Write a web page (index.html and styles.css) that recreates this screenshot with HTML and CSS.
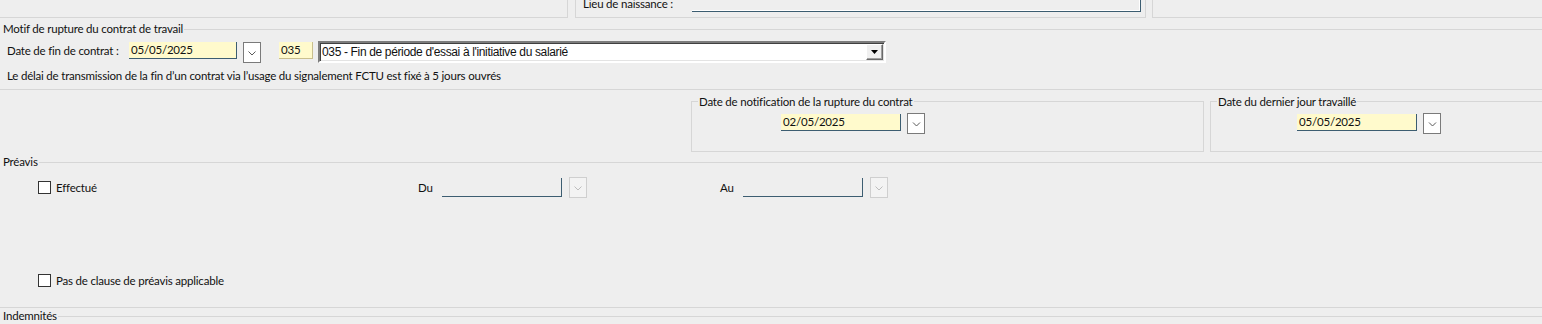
FILE: index.html
```html
<!DOCTYPE html>
<html lang="fr">

<head>
  <meta charset="UTF-8">
  <meta name="viewport" content="width=device-width, initial-scale=1.0">
  <link rel="stylesheet" href="styles.css">
  <title>Motif de rupture du contrat</title>
</head>

<body>
  <!-- bas des cadres du bloc précédent -->
  <div class="top">
    <div class="box box-left"></div>
    <div class="box box-mid">
      <span class="lbl lbl-lieu">Lieu de naissance :</span>
      <div class="field-dark"></div>
    </div>
    <div class="box box-right"></div>
  </div>

  <div class="legend legend-motif"><span>Motif de rupture du contrat de travail</span></div>
  <div class="row row-fin">
    <span class="lbl lbl-fin">Date de fin de contrat :</span>
    <div class="date date-fin">05/05/2025</div>
    <div class="btn"><svg width="16" height="19" viewBox="0 0 16 19"><path d="M4.5 8.5 L8 12 L11.5 8.5" fill="none" stroke="#5a5a5a" stroke-width="1"/></svg></div>
    <div class="date code">035</div>
    <div class="combo">
      <span class="combo-text">035 - Fin de période d'essai à l'initiative du salarié</span>
      <div class="combo-arrow"><svg width="7" height="4" viewBox="0 0 7 4"><path d="M0 0 H7 L3.5 4 Z" fill="#000"/></svg></div>
    </div>
  </div>
  <p class="note">Le délai de transmission de la fin d’un contrat via l’usage du signalement FCTU est fixé à 5 jours ouvrés</p>
  <div class="sep sep-dates"></div>

  <div class="dates">
    <fieldset class="grp grp-notif">
      <legend>Date de notification de la rupture du contrat</legend>
      <div class="grp-body">
        <div class="date date-grp">02/05/2025</div>
        <div class="btn"><svg width="17" height="19" viewBox="0 0 17 19"><path d="M5 8.5 L8.5 12 L12 8.5" fill="none" stroke="#5a5a5a" stroke-width="1"/></svg></div>
      </div>
    </fieldset>
    <fieldset class="grp grp-dernier">
      <legend>Date du dernier jour travaillé</legend>
      <div class="grp-body">
        <div class="date date-grp">05/05/2025</div>
        <div class="btn"><svg width="17" height="19" viewBox="0 0 17 19"><path d="M5 8.5 L8.5 12 L12 8.5" fill="none" stroke="#5a5a5a" stroke-width="1"/></svg></div>
      </div>
    </fieldset>
  </div>

  <div class="legend legend-preavis"><span>Préavis</span></div>
  <div class="row row-preavis">
    <div class="chk-col">
      <span class="chk"></span><span class="chk-lbl">Effectué</span>
    </div>
    <span class="lbl lbl-du">Du</span>
    <div class="field-empty"></div>
    <div class="btn btn-off"><svg width="16" height="19" viewBox="0 0 16 19"><path d="M4.5 8.5 L8 12 L11.5 8.5" fill="none" stroke="#bdbdbd" stroke-width="1"/></svg></div>
    <span class="lbl lbl-au">Au</span>
    <div class="field-empty"></div>
    <div class="btn btn-off"><svg width="16" height="19" viewBox="0 0 16 19"><path d="M4.5 8.5 L8 12 L11.5 8.5" fill="none" stroke="#bdbdbd" stroke-width="1"/></svg></div>
  </div>
  <div class="row row-clause">
    <span class="chk"></span><span class="chk-lbl">Pas de clause de préavis applicable</span>
  </div>
  <div class="sep sep-indem"></div>
  <div class="legend legend-indem"><span>Indemnités</span></div>
</body>

</html>
```

FILE: styles.css
```css
:root {
  --bg: #eeeeee;
  --line: #d6d6d6;
  --yellow: #fffacc;
  --field-border: #3c5d71;
  --text: #111;
}

html,
body {
  margin: 0;
  height: 100%;
}

body {
  width: 1542px;
  overflow: hidden;
  background-color: var(--bg);
  color: var(--text);
  font-family: Lato, "Noto Sans", sans-serif;
  font-size: 11.5px;
  letter-spacing: -0.2px;
  line-height: 14px;
}

/* haut de page : bas des cadres */
.top {
  display: flex;
  height: 18px;
}

.box {
  box-sizing: border-box;
  height: 18px;
  border-bottom: 1px solid var(--line);
}

.box-left {
  width: 568px;
  border-right: 1px solid var(--line);
}

.box-mid {
  width: 571px;
  margin-left: 7px;
  border-left: 1px solid var(--line);
  border-right: 1px solid var(--line);
  display: flex;
  align-items: flex-start;
}

.box-right {
  flex: 1;
  margin-left: 6px;
  border-left: 1px solid var(--line);
}

.lbl-lieu {
  margin: -5px 0 0 7px;
  width: 109px;
}

.field-dark {
  width: 449px;
  height: 12px;
  box-sizing: border-box;
  border-right: 1px solid var(--field-border);
  border-bottom: 1px solid var(--field-border);
  box-shadow: inset -1px -1px 0 #fff;
}

/* titres de groupe */
.legend {
  display: flex;
  align-items: center;
  height: 14px;
  padding-left: 3px;
}

.legend::after {
  content: "";
  flex: 1;
  border-top: 1px solid var(--line);
  margin-left: 1px;
}

.legend-motif {
  margin-top: 4px;
}

.legend-preavis {
  margin-top: 3px;
}

.legend-indem {
  margin-top: 1px;
}

.sep {
  border-top: 1px solid var(--line);
}

.sep-dates {
  margin-top: 6px;
}

.sep-indem {
  margin-top: 20px;
}

.row {
  display: flex;
  align-items: flex-start;
}

.lbl {
  line-height: 17px;
  white-space: nowrap;
}

/* ligne date de fin */
.row-fin {
  margin-top: 6px;
  height: 21px;
}

.lbl-fin {
  margin-left: 7px;
  width: 122px;
}

.date {
  box-sizing: border-box;
  height: 17px;
  padding-left: 2px;
  line-height: 16px;
  background-color: var(--yellow);
  border-right: 1px solid var(--field-border);
  border-bottom: 1px solid var(--field-border);
}

.date-fin {
  width: 108px;
}

.code {
  width: 34px;
  margin-left: 18px;
  border-color: #c9bf8e;
}

.btn {
  box-sizing: border-box;
  width: 18px;
  height: 21px;
  margin-left: 6px;
  background-color: #fff;
  border: 1px solid #7a7a7a;
}

.btn svg {
  display: block;
}

.btn-off {
  background-color: #f3f3f3;
  border-color: #cfcfcf;
}

.combo {
  box-sizing: border-box;
  width: 568px;
  height: 22px;
  margin: -1px 0 0 5px;
  display: flex;
  align-items: center;
  justify-content: space-between;
  background-color: #fff;
  border: 2px solid;
  border-color: #7c7c7c #fff #fff #7c7c7c;
  box-shadow: inset 1px 1px 0 #404040, inset -1px -1px 0 #e3e3e3;
  font-family: "Liberation Sans", Arial, sans-serif;
  font-size: 12px;
  letter-spacing: -0.35px;
}

.combo-text {
  padding-left: 2px;
}

.combo-arrow {
  box-sizing: border-box;
  width: 17px;
  height: 16px;
  margin-right: 1px;
  display: flex;
  align-items: center;
  justify-content: center;
  background-color: #f0f0f0;
  border: 1px solid;
  border-color: #fff #6a6a6a #6a6a6a #fff;
  box-shadow: inset -1px -1px 0 #a0a0a0;
}

.note {
  margin: 6px 0 0 7px;
  line-height: 14px;
}

/* cadres de dates */
.dates {
  display: flex;
  margin-top: 5px;
}

.grp {
  box-sizing: border-box;
  height: 57px;
  margin: 0;
  padding: 0;
  border: 1px solid var(--line);
}

.grp legend {
  margin-left: 6px;
  padding: 0 1px;
  line-height: 13px;
}

.grp-notif {
  width: 513px;
  margin-left: 691px;
}

.grp-notif .grp-body {
  padding-left: 89px;
}

.grp-dernier {
  flex: 1;
  margin: 0 -10px 0 6px;
}

.grp-dernier .grp-body {
  padding-left: 86px;
}

.grp-body {
  display: flex;
  align-items: flex-start;
  margin-top: 5px;
}

.date-grp {
  width: 120px;
  margin-top: 1px;
}

/* préavis */
.row-preavis {
  margin-top: 8px;
  height: 21px;
}

.chk-col {
  display: flex;
  align-items: center;
  width: 380px;
  margin: 4px 0 0 38px;
}

.chk {
  box-sizing: border-box;
  width: 13px;
  height: 13px;
  background-color: #fff;
  border: 1px solid #333;
}

.chk-lbl {
  margin-left: 5px;
  line-height: 13px;
}

.lbl-du {
  margin-top: 2px;
  width: 24px;
}

.lbl-au {
  margin: 2px 0 0 133px;
  width: 23px;
}

.field-empty {
  box-sizing: border-box;
  width: 120px;
  height: 19px;
  margin-top: 1px;
  border-right: 1px solid var(--field-border);
  border-bottom: 1px solid var(--field-border);
}

.row-preavis .btn {
  margin-left: 7px;
}

.row-clause {
  margin: 76px 0 0 38px;
  align-items: center;
}
```
